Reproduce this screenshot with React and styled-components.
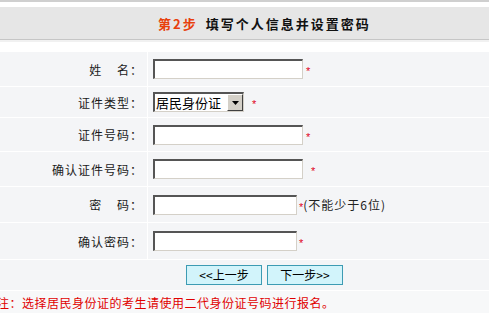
import styled, { createGlobalStyle } from "styled-components";

const GlobalStyle = createGlobalStyle`
  html, body {
    margin: 0;
    padding: 0;
    background: #ffffff;
    font-family: "Noto Sans CJK SC", "Liberation Sans", sans-serif;
    font-size: 12px;
    color: #222;
    overflow: hidden;
  }
`;

const fields = [
  { label: "姓\u00a0\u00a0\u00a0\u00a0名：", kind: "text", width: 150, h: 34, gap: 3 },
  { label: "证件类型：", kind: "select", h: 30, gap: 8 },
  { label: "证件号码：", kind: "text", width: 150, h: 33, gap: 3 },
  { label: "确认证件号码：", kind: "text", width: 150, h: 34, gap: 8 },
  { label: "密\u00a0\u00a0\u00a0\u00a0码：", kind: "text", width: 144, h: 35, gap: 2, hint: "(不能少于6位)" },
  { label: "确认密码：", kind: "text", width: 144, h: 36, gap: 2 },
];

function App() {
  return (
    <Page>
      <GlobalStyle />
      <TopRule />
      <Header>
        <StepNo>第2步</StepNo>
        <StepTitle>填写个人信息并设置密码</StepTitle>
      </Header>
      <Form>
        {fields.map((f) => (
          <Row key={f.label} $h={f.h}>
            <LabelCell>{f.label}</LabelCell>
            <ValueCell>
              {f.kind === "select" ? (
                <FakeSelect>
                  <SelectText>居民身份证</SelectText>
                  <SelectButton>
                    <svg width="7" height="4" viewBox="0 0 7 4">
                      <path d="M0 0h7L3.5 4z" fill="#000" />
                    </svg>
                  </SelectButton>
                </FakeSelect>
              ) : (
                <TextBox $w={f.width} />
              )}
              <Required $gap={f.gap}>*</Required>
              {f.hint && <Hint>{f.hint}</Hint>}
            </ValueCell>
          </Row>
        ))}
        <ButtonRow>
          <NavButton>&lt;&lt;上一步</NavButton>
          <NavButton>下一步&gt;&gt;</NavButton>
        </ButtonRow>
        <Note>注：选择居民身份证的考生请使用二代身份证号码进行报名。</Note>
      </Form>
    </Page>
  );
}

const Page = styled.div`
  width: 489px;
  height: 315px;
  overflow: hidden;
`;

const TopRule = styled.div`
  height: 2px;
  background: #cfcfcf;
  margin-bottom: 5px;
`;

const Header = styled.div`
  height: 32px;
  background: #e6e6e6;
  border-bottom: 1px solid #c6c6c6;
  box-shadow: 0 2px 0 #f1f1f1;
  display: flex;
  align-items: center;
  padding-left: 158px;
  font-size: 13px;
  font-weight: 700;
  letter-spacing: 2px;
`;

const StepNo = styled.span`
  color: #e8400c;
  margin-right: 8px;
`;

const StepTitle = styled.span`
  color: #111;
`;

const Form = styled.div`
  margin-top: 12px;
  background: #ffffff;
  display: flex;
  flex-direction: column;
  gap: 1px;
`;

const Row = styled.div`
  display: grid;
  grid-template-columns: 147px 1fr;
  column-gap: 1px;
  height: ${(p) => p.$h}px;
`;

const LabelCell = styled.div`
  background: #f4f5f7;
  display: flex;
  align-items: center;
  justify-content: flex-end;
  padding-right: 4px;
  white-space: nowrap;
  color: #1a1a1a;
  letter-spacing: 1px;
`;

const ValueCell = styled.div`
  background: #f4f5f7;
  display: flex;
  align-items: center;
  padding-left: 5px;
`;

const TextBox = styled.div`
  box-sizing: border-box;
  width: ${(p) => p.$w}px;
  height: 20px;
  background: #ffffff;
  border-top: 2px solid #555555;
  border-left: 2px solid #555555;
  border-bottom: 1px solid #d4d0c8;
  border-right: 1px solid #d4d0c8;
`;

const FakeSelect = styled.div`
  box-sizing: border-box;
  width: 91px;
  height: 20px;
  background: #ffffff;
  border-top: 2px solid #555555;
  border-left: 2px solid #555555;
  border-bottom: 1px solid #d4d0c8;
  border-right: 1px solid #d4d0c8;
  display: flex;
  align-items: center;
`;

const SelectText = styled.span`
  flex: 1;
  font-size: 13px;
  line-height: 17px;
  padding-left: 1px;
  color: #000;
  white-space: nowrap;
`;

const SelectButton = styled.span`
  box-sizing: border-box;
  width: 16px;
  height: 17px;
  background: #d4d0c8;
  border-top: 1px solid #ffffff;
  border-left: 1px solid #ffffff;
  border-right: 1px solid #404040;
  border-bottom: 1px solid #404040;
  display: flex;
  align-items: center;
  justify-content: center;
`;

const Required = styled.span`
  color: #e0001b;
  font-family: "Liberation Sans", sans-serif;
  font-size: 11px;
  line-height: 1;
  margin-left: ${(p) => p.$gap}px;
  padding-top: 5px;
`;

const Hint = styled.span`
  color: #222;
  font-size: 12px;
  letter-spacing: 1px;
`;

const ButtonRow = styled.div`
  height: 30px;
  background: #f4f5f7;
  display: flex;
  align-items: center;
  gap: 5px;
  padding-left: 186px;
`;

const NavButton = styled.button`
  box-sizing: border-box;
  width: 76px;
  height: 20px;
  padding: 0;
  background: #d2f4fb;
  border: 1px solid #3d9bb3;
  font-family: "Noto Sans CJK SC", "Liberation Sans", sans-serif;
  font-size: 12px;
  line-height: 18px;
  color: #000;
`;

const Note = styled.div`
  background: #f7f8f9;
  height: 22px;
  display: flex;
  align-items: center;
  margin-left: -3px;
  color: #e00000;
  font-size: 12px;
  letter-spacing: 0.5px;
  white-space: nowrap;
`;

export default App;
